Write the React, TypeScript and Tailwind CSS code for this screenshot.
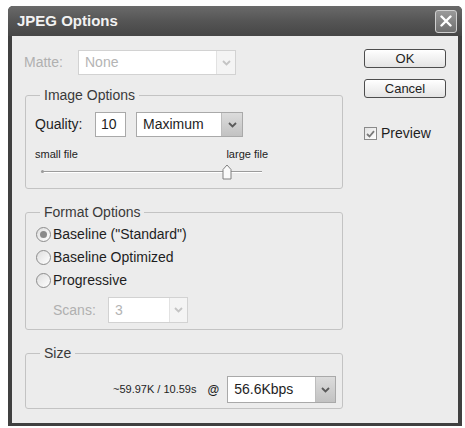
import React from "react";

const font = { fontFamily: '"Liberation Sans", Arial, sans-serif' };

const Chevron = ({ dim }: { dim?: boolean }) => (
    <svg width="9" height="6" viewBox="0 0 9 6">
        <path d="M1 1 L4.5 4.5 L8 1" fill="none" stroke={dim ? "#c4c4c4" : "#5a5a5a"} strokeWidth="1.8" />
    </svg>
);

const Select = ({ value, className, disabled, box }: { value: string; className: string; disabled?: boolean; box: string }) => (
    <div className={`flex items-stretch border bg-white ${disabled ? "border-[#d2d2d2]" : "border-[#a9a9a9]"} ${className}`}>
        <div className={`flex-1 flex items-center pl-[6px] text-[14px] ${disabled ? "text-[#b4b4b4]" : "text-[#1e1e1e]"}`}>{value}</div>
        <div className={`${box} flex items-center justify-center border-l ${disabled ? "border-[#e2e2e2] bg-[#f4f4f4]" : "border-[#bdbdbd] bg-gradient-to-b from-[#dcdcdc] to-[#c2c2c2]"}`}>
            <Chevron dim={disabled} />
        </div>
    </div>
);

const Radio = ({ label, checked }: { label: string; checked?: boolean }) => (
    <div className="flex h-[23px] items-center">
        <div className="ml-[10px] flex h-[15px] w-[15px] items-center justify-center rounded-full border border-[#8c8c8c] bg-gradient-to-br from-[#dedede] to-white">
            {checked && <div className="h-[7px] w-[7px] rounded-full bg-[#8a8a8a]" />}
        </div>
        <span className="ml-[2px] text-[14px] text-[#1e1e1e]">{label}</span>
    </div>
);

const Group = ({ title, className, children }: { title: string; className: string; children: React.ReactNode }) => (
    <fieldset className={`rounded-[3px] border border-[#c3c3c3] ${className}`}>
        <legend className="ml-[14px] px-[4px] text-[14px] leading-[16px] text-[#3a3a3a]">{title}</legend>
        {children}
    </fieldset>
);

const Button = ({ label, className }: { label: string; className?: string }) => (
    <div className={`flex h-[19px] w-[82px] items-center justify-center rounded-[3px] border border-[#4d4d4d] bg-gradient-to-b from-white to-[#e4e4e4] text-[13px] text-[#1e1e1e] ${className ?? ""}`}>
        {label}
    </div>
);

export default function App() {
    return (
        <div className="min-h-screen bg-white pl-[8px] pt-[6px]" style={font}>
            <div className="flex h-[420px] w-[454px] flex-col overflow-hidden rounded-t-[5px] bg-[#404040]">
                {/* title bar */}
                <div className="flex h-[30px] items-center justify-between bg-gradient-to-b from-[#6a6a6a] via-[#555555] to-[#464646] pl-[9px] pr-[5px]">
                    <span className="text-[15px] font-bold text-[#f2f2f2]">JPEG Options</span>
                    <div className="flex h-[23px] w-[22px] items-center justify-center rounded-[3px] border border-[#cfcfcf] bg-gradient-to-b from-[#9a9a9a] to-[#6f6f6f]">
                        <svg width="12" height="12" viewBox="0 0 12 12">
                            <path d="M1.5 1.5 L10.5 10.5 M10.5 1.5 L1.5 10.5" stroke="#ffffff" strokeWidth="2.4" strokeLinecap="round" />
                        </svg>
                    </div>
                </div>

                {/* body */}
                <div className="mx-[4px] mb-[3px] flex flex-1 bg-[#ececec] pl-[13px]">
                    <div className="flex w-[318px] flex-col pt-[14px]">
                        <div className="flex h-[25px] items-center">
                            <span className="-ml-px w-[54px] text-[14px] text-[#b0b0b0]">Matte:</span>
                            <Select value="None" disabled className="h-[25px] w-[158px]" box="w-[19px]" />
                        </div>

                        <Group title="Image Options" className="mt-[12px] h-[102px]">
                            <div className="px-[9px] pt-[9px]">
                                <div className="flex h-[25px] items-center">
                                    <span className="w-[60px] text-[14px] text-[#1e1e1e]">Quality:</span>
                                    <div className="flex h-[25px] w-[31px] items-center border border-[#a9a9a9] bg-white pl-[5px] text-[14px] text-[#1e1e1e]">10</div>
                                    <Select value="Maximum" className="ml-[10px] h-[25px] w-[107px]" box="w-[21px]" />
                                </div>
                                <div className="mt-[11px] flex h-[13px] items-center justify-between pr-[65px] text-[11px] text-[#222]">
                                    <span>small file</span>
                                    <span>large file</span>
                                </div>
                                <div className="relative ml-[7px] mt-[3px] h-[16px] w-[220px]">
                                    <div className="absolute left-0 right-0 top-[7px] h-[1px] bg-[#9c9c9c]" />
                                    <div className="absolute left-0 right-0 top-[8px] h-[1px] bg-white" />
                                    <div className="absolute left-[-1px] top-[6px] h-[3px] w-[3px] rounded-full bg-[#9c9c9c]" />
                                    <svg className="absolute left-[180px] top-0" width="10" height="16" viewBox="0 0 10 16">
                                        <path d="M1 5.5 L5 1 L9 5.5 L9 15 L1 15 Z" fill="#fafafa" stroke="#808080" strokeWidth="1" />
                                    </svg>
                                </div>
                            </div>
                        </Group>

                        <Group title="Format Options" className="mt-[15px] h-[126px]">
                            <div className="pt-[3px]">
                                <Radio label={'Baseline ("Standard")'} checked />
                                <Radio label="Baseline Optimized" />
                                <Radio label="Progressive" />
                                <div className="mt-[5px] flex h-[26px] items-center">
                                    <span className="ml-[27px] w-[55px] text-[14px] text-[#b0b0b0]">Scans:</span>
                                    <Select value="3" disabled className="h-[26px] w-[80px]" box="w-[18px]" />
                                </div>
                            </div>
                        </Group>

                        <Group title="Size" className="mt-[15px] h-[64px]">
                            <div className="flex items-center pt-[15px]">
                                <span className="ml-[87px] text-[11px] text-[#1e1e1e]">~59.97K / 10.59s</span>
                                <span className="ml-[11px] text-[12px] font-bold text-[#1e1e1e]">@</span>
                                <Select value="56.6Kbps" className="ml-[8px] h-[27px] w-[109px]" box="w-[20px]" />
                            </div>
                        </Group>
                    </div>

                    <div className="ml-[21px] flex flex-col pt-[13px]">
                        <Button label="OK" />
                        <Button label="Cancel" className="mt-[11px]" />
                        <div className="mt-[25px] flex items-center">
                            <div className="flex h-[13px] w-[13px] items-center justify-center border border-[#8a8a8a] bg-gradient-to-br from-[#e2e2e2] to-white">
                                <svg width="9" height="8" viewBox="0 0 9 8">
                                    <path d="M1 4 L3.5 6.5 L8 1.2" fill="none" stroke="#7a7a7a" strokeWidth="1.8" />
                                </svg>
                            </div>
                            <span className="ml-[4px] text-[14px] text-[#1e1e1e]">Preview</span>
                        </div>
                    </div>
                </div>
            </div>
        </div>
    );
}
